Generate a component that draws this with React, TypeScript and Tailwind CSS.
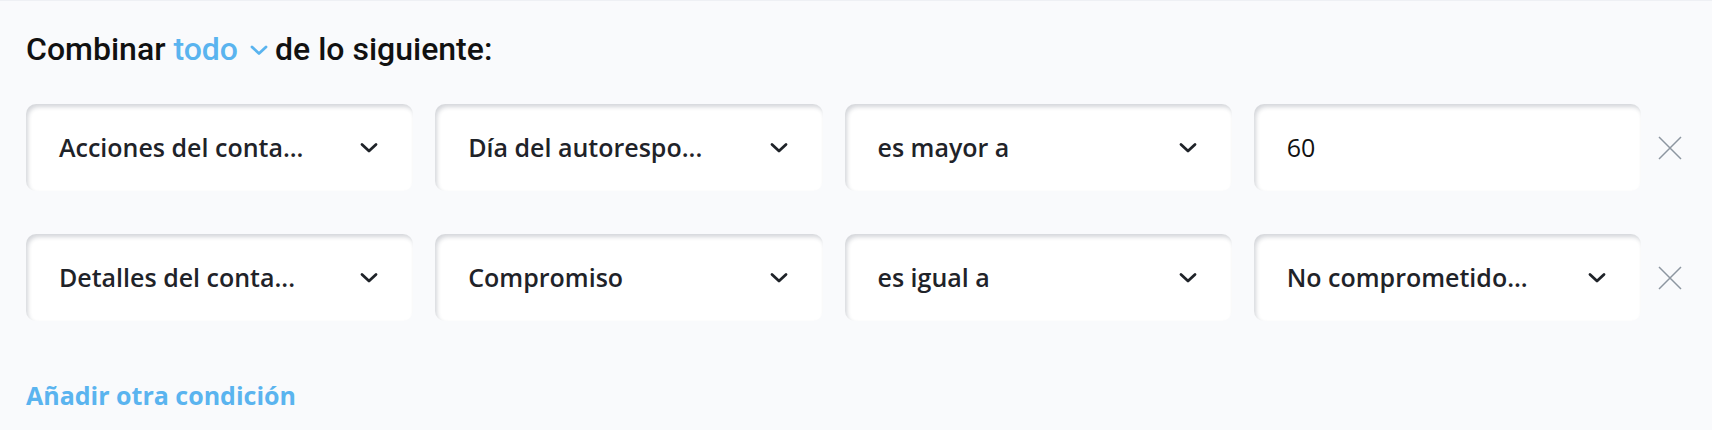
import React from "react";

const Chevron = () => (
  <svg width="18" height="12" viewBox="0 0 18 12" fill="none" className="shrink-0">
    <path d="M2 2.5 L9 9 L16 2.5" stroke="#1f2329" strokeWidth="2.8" strokeLinecap="round" strokeLinejoin="round" />
  </svg>
);

const XIcon = () => (
  <svg width="24" height="24" viewBox="0 0 24 24" fill="none" className="shrink-0">
    <path d="M1 1 L23 23 M23 1 L1 23" stroke="#8d96a0" strokeWidth="1.5" />
  </svg>
);

const boxCls =
  "flex-1 h-[87px] rounded-[10px] bg-white shadow-[inset_2px_3px_4px_rgba(40,50,70,0.2)] flex items-center pl-[33px] pr-[35px]";

const Select = ({ label }: { label: string }) => (
  <div className={boxCls}>
    <span className="flex-1 text-[25px] font-semibold text-[#1f2329] whitespace-nowrap" style={{ fontFamily: '"Open Sans", sans-serif' }}>
      {label}
    </span>
    <Chevron />
  </div>
);

const Input = ({ value }: { value: string }) => (
  <div className={boxCls}>
    <span className="flex-1 text-[25px] font-normal text-[#111] whitespace-nowrap" style={{ fontFamily: '"Open Sans", sans-serif' }}>
      {value}
    </span>
  </div>
);

const Row = ({ children }: { children: React.ReactNode }) => (
  <div className="flex items-center">
    <div className="flex-1 flex gap-[22px]">{children}</div>
    <div className="ml-[17px]">
      <XIcon />
    </div>
  </div>
);

export default function App() {
  return (
    <div className="min-h-[430px] bg-[#f9fafc] border-t border-[#eef0f4] pl-[26px] pr-[30px] pt-[28px]">
      <div
        className="flex items-center h-[40px] text-[32px] font-medium text-[#111]"
        style={{ fontFamily: "Roboto, sans-serif" }}
      >
        <span>Combinar&nbsp;</span>
        <span className="text-[#5ab4ef]">todo</span>
        <svg width="18" height="11" viewBox="0 0 18 11" fill="none" className="ml-[12px] mr-[7px] mt-[2px]">
          <path d="M2 2 L9 8.5 L16 2" stroke="#5ab4ef" strokeWidth="2.8" strokeLinecap="round" strokeLinejoin="round" />
        </svg>
        <span>de lo siguiente:</span>
      </div>

      <div className="mt-[35px] flex flex-col gap-[43px]">
        <Row>
          <Select label="Acciones del conta..." />
          <Select label="Día del autorespo..." />
          <Select label="es mayor a" />
          <Input value="60" />
        </Row>
        <Row>
          <Select label="Detalles del conta..." />
          <Select label="Compromiso" />
          <Select label="es igual a" />
          <Select label="No comprometido..." />
        </Row>
      </div>

      <div
        className="mt-[58px] text-[25px] leading-[32px] font-bold text-[#5ab4ef]"
        style={{ fontFamily: '"Open Sans", sans-serif' }}
      >
        Añadir otra condición
      </div>
    </div>
  );
}
